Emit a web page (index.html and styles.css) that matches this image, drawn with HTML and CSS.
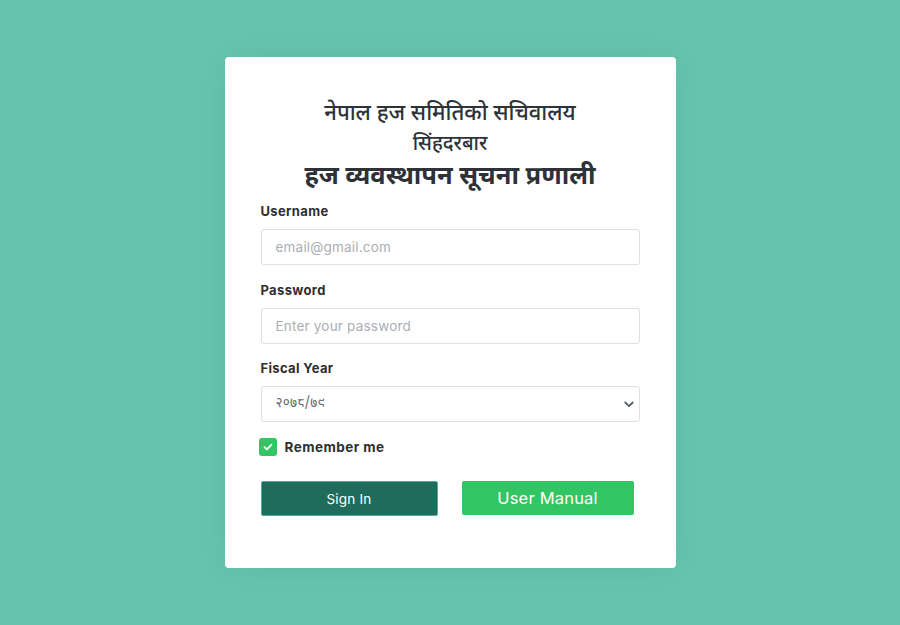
FILE: index.html
```html
<!DOCTYPE html>
<html lang="ne">
<head>
<meta charset="utf-8">
<title>Login</title>
<link rel="stylesheet" href="styles.css">
</head>
<body>
<main class="page">
  <section class="card">
    <header class="brand">
      <h2 class="brand-line1">नेपाल हज समितिको सचिवालय</h2>
      <h3 class="brand-line2">सिंहदरबार</h3>
      <h1 class="brand-title">हज व्यवस्थापन सूचना प्रणाली</h1>
    </header>
    <form class="form">
      <div class="field">
        <label class="label" for="u">Username</label>
        <input class="input" id="u" type="text" placeholder="email@gmail.com">
      </div>
      <div class="field">
        <label class="label" for="p">Password</label>
        <input class="input" id="p" type="password" placeholder="Enter your password">
      </div>
      <div class="field field-last">
        <label class="label" for="f">Fiscal Year</label>
        <div class="select-wrap">
          <select class="input select" id="f"><option>२०७८/७९</option></select>
          <svg class="chev" width="10" height="7" viewBox="0 0 10 7"><path d="M1.3 1.5 L5 5.2 L8.7 1.5" fill="none" stroke="#5d636b" stroke-width="1.9" stroke-linecap="round" stroke-linejoin="round"/></svg>
        </div>
      </div>
      <div class="remember">
        <span class="check"><svg width="10" height="8" viewBox="0 0 10 8"><path d="M1.5 4.2 L3.9 6.4 L8.5 1.6" fill="none" stroke="#fff" stroke-width="1.8" stroke-linecap="round" stroke-linejoin="round"/></svg></span>
        <span class="remember-text">Remember me</span>
      </div>
      <div class="actions">
        <button type="button" class="btn btn-signin">Sign In</button>
        <button type="button" class="btn btn-manual">User Manual</button>
      </div>
    </form>
  </section>
</main>
</body>
</html>
```
FILE: styles.css
```css
* { box-sizing: border-box; }
html, body { margin: 0; padding: 0; }
body {
  background: #66c5b0;
  font-family: Inter, "Open Sans", sans-serif;
  color: #2b2f33;
  width: 900px;
  height: 625px;
  overflow: hidden;
}
.page {
  display: flex;
  justify-content: center;
  padding-top: 57px;
}
.card {
  width: 451px;
  height: 511px;
  background: #fff;
  border-radius: 4px;
  box-shadow: 0 0 30px rgba(60, 150, 130, 0.25);
  padding: 42px 36px 0 36px;
}
.brand {
  text-align: center;
  color: #2d3238;
  font-family: "Noto Sans Devanagari", "Noto Sans", sans-serif;
}
.brand-line1 {
  margin: 0;
  font-size: 22px;
  font-weight: 500;
  line-height: 32px;
}
.brand-line2 {
  margin: 0;
  font-size: 20px;
  font-weight: 500;
  line-height: 28px;
}
.brand-title {
  margin: 1px 0 0 0;
  font-size: 25.5px;
  font-weight: 700;
  line-height: 36px;
}
.form {
  margin-top: 6px;
}
.field {
  display: flex;
  flex-direction: column;
  margin-bottom: 16px;
}
.field-last {
  margin-top: -1px;
}
.label {
  font-size: 13px;
  font-weight: 700;
  color: #2b2f33;
  line-height: 18px;
  margin-bottom: 9px;
  letter-spacing: 0.35px;
}
.input {
  width: 379px;
  height: 36px;
  border: 1px solid #dcdfe4;
  border-radius: 3px;
  padding: 0 14px;
  font-family: Inter, "Open Sans", sans-serif;
  font-size: 13.5px;
  letter-spacing: 0.2px;
  color: #555b62;
  background: #fff;
  outline: none;
}
.input::placeholder { color: #a9aeb5; }
.select-wrap { position: relative; }
.select {
  appearance: none;
  -webkit-appearance: none;
  font-family: "Noto Sans Devanagari", "Noto Sans", sans-serif;
  color: #62686f;
}
.chev {
  position: absolute;
  right: 6px;
  top: 15px;
}
.remember {
  display: flex;
  align-items: center;
  gap: 8px;
  margin-left: -2px;
  margin-top: 16px;
}
.check {
  width: 18px;
  height: 18px;
  border-radius: 3px;
  background: #34c463;
  display: flex;
  align-items: center;
  justify-content: center;
}
.remember-text {
  font-size: 13.5px;
  font-weight: 700;
  color: #2b2f33;
  letter-spacing: 0.45px;
}
.actions {
  display: flex;
  align-items: flex-start;
  gap: 24px;
  margin-top: 25px;
}
.btn {
  border-radius: 2px;
  font-family: Inter, "Open Sans", sans-serif;
  color: #fff;
  cursor: pointer;
}
.btn-signin {
  width: 177px;
  height: 35px;
  background: #206c5c;
  border: 1px solid #4fae9b;
  font-size: 13.5px;
  letter-spacing: 0.2px;
}
.btn-manual {
  width: 172px;
  height: 34px;
  background: #32c563;
  border: none;
  font-size: 16.5px;
  letter-spacing: 0.2px;
}
```
